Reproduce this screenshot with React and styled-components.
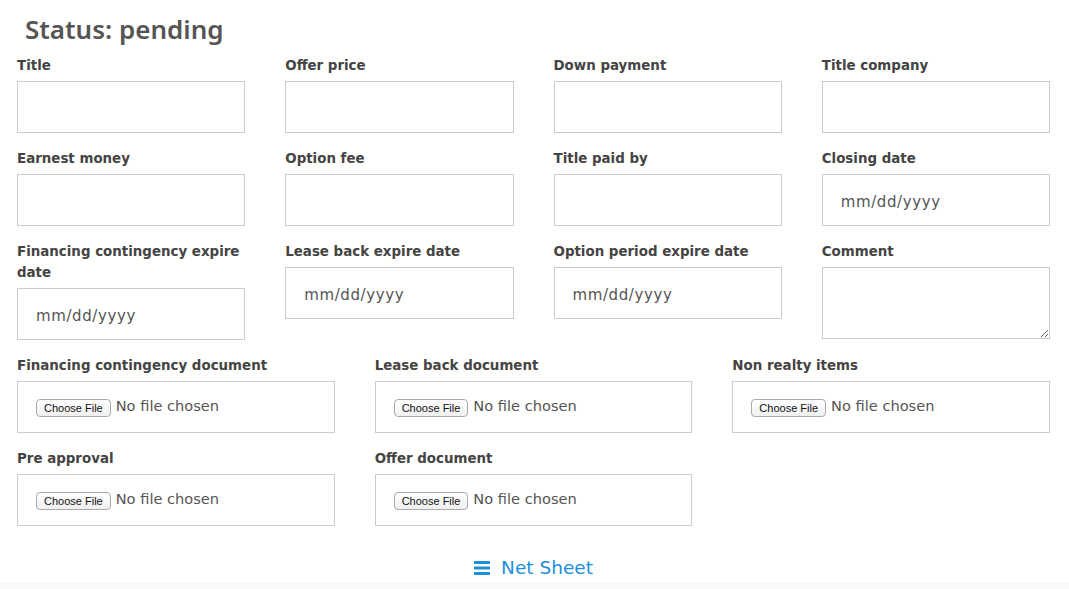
import React from "react";
import styled, { createGlobalStyle } from "styled-components";

const fields = [
  { label: "Title" },
  { label: "Offer price" },
  { label: "Down payment" },
  { label: "Title company" },
  { label: "Earnest money" },
  { label: "Option fee" },
  { label: "Title paid by" },
  { label: "Closing date", date: true },
  { label: "Financing contingency expire date", date: true },
  { label: "Lease back expire date", date: true },
  { label: "Option period expire date", date: true },
  { label: "Comment", area: true },
];

const documents = [
  "Financing contingency document",
  "Lease back document",
  "Non realty items",
  "Pre approval",
  "Offer document",
];

export default function App() {
  return (
    <>
      <GlobalStyle />
      <Page>
        <Status>Status: pending</Status>
        <FieldGrid>
          {fields.map((f) => (
            <Field key={f.label}>
              <Label>{f.label}</Label>
              {f.area ? (
                <Comment />
              ) : (
                <TextInput type="text" placeholder={f.date ? "mm/dd/yyyy" : ""} />
              )}
            </Field>
          ))}
        </FieldGrid>
        <DocGrid>
          {documents.map((d) => (
            <Field key={d}>
              <Label>{d}</Label>
              <FileBox>
                <ChooseButton type="button">Choose File</ChooseButton>
                <NoFile>No file chosen</NoFile>
              </FileBox>
            </Field>
          ))}
        </DocGrid>
        <NetSheet href="#">
          <svg width="16" height="14" viewBox="0 0 16 14">
            <rect x="0" y="0" width="16" height="3" fill="currentColor" />
            <rect x="0" y="5.5" width="16" height="3" fill="currentColor" />
            <rect x="0" y="11" width="16" height="3" fill="currentColor" />
          </svg>
          Net Sheet
        </NetSheet>
      </Page>
      <Footer />
    </>
  );
}

const GlobalStyle = createGlobalStyle`
  body {
    margin: 0;
    background: #fffffd;
    font-family: "DejaVu Sans", "Noto Sans", sans-serif;
    color: #444;
  }
`;

const Page = styled.div`
  display: flex;
  flex-direction: column;
  padding: 14px 19px 0 17px;
`;

const Status = styled.h1`
  margin: 0 0 11px 8px;
  font-family: "Noto Sans", "DejaVu Sans", sans-serif;
  font-size: 26px;
  font-weight: 600;
  line-height: 30px;
  color: #555;
`;

const FieldGrid = styled.div`
  display: grid;
  grid-template-columns: repeat(4, 1fr);
  column-gap: 40px;
  row-gap: 15px;
  align-items: start;
`;

const DocGrid = styled(FieldGrid)`
  grid-template-columns: repeat(3, 1fr);
  margin-top: 15px;
`;

const Field = styled.div`
  display: flex;
  flex-direction: column;
  gap: 5px;
`;

const Label = styled.label`
  font-size: 13.4px;
  font-weight: bold;
  line-height: 21px;
  color: #444;
`;

const TextInput = styled.input`
  box-sizing: border-box;
  height: 52px;
  width: 100%;
  border: 1px solid #ccc;
  background: #fff;
  padding: 3px 18px 0;
  font-family: "DejaVu Sans", sans-serif;
  font-size: 15px;
  letter-spacing: 0.6px;
  color: #555;
  outline: none;
  &::placeholder {
    color: #555;
  }
`;

const Comment = styled.textarea`
  box-sizing: border-box;
  height: 72px;
  width: 100%;
  border: 1px solid #ccc;
  background: #fff;
  margin: 0;
  display: block;
`;

const FileBox = styled.div`
  box-sizing: border-box;
  height: 52px;
  display: flex;
  align-items: center;
  gap: 5px;
  padding: 0 18px;
  border: 1px solid #ccc;
  background: #fff;
`;

const ChooseButton = styled.button`
  margin-top: 2px;
  height: 18px;
  padding: 0 7px;
  font-family: "Liberation Sans", Arial, sans-serif;
  font-size: 11px;
  color: #111;
  background: linear-gradient(#fff, #f0f0f0);
  border: 1px solid #aaa;
  border-radius: 4px;
`;

const NoFile = styled.span`
  margin-top: -4px;
  font-size: 14.6px;
  color: #555;
`;

const NetSheet = styled.a`
  align-self: center;
  margin-top: 31px;
  display: flex;
  align-items: center;
  gap: 11px;
  font-size: 18.5px;
  line-height: 22px;
  color: #1b8fde;
  text-decoration: none;
`;

const Footer = styled.div`
  margin-top: 4px;
  height: 20px;
  background: #f9f9f7;
`;
